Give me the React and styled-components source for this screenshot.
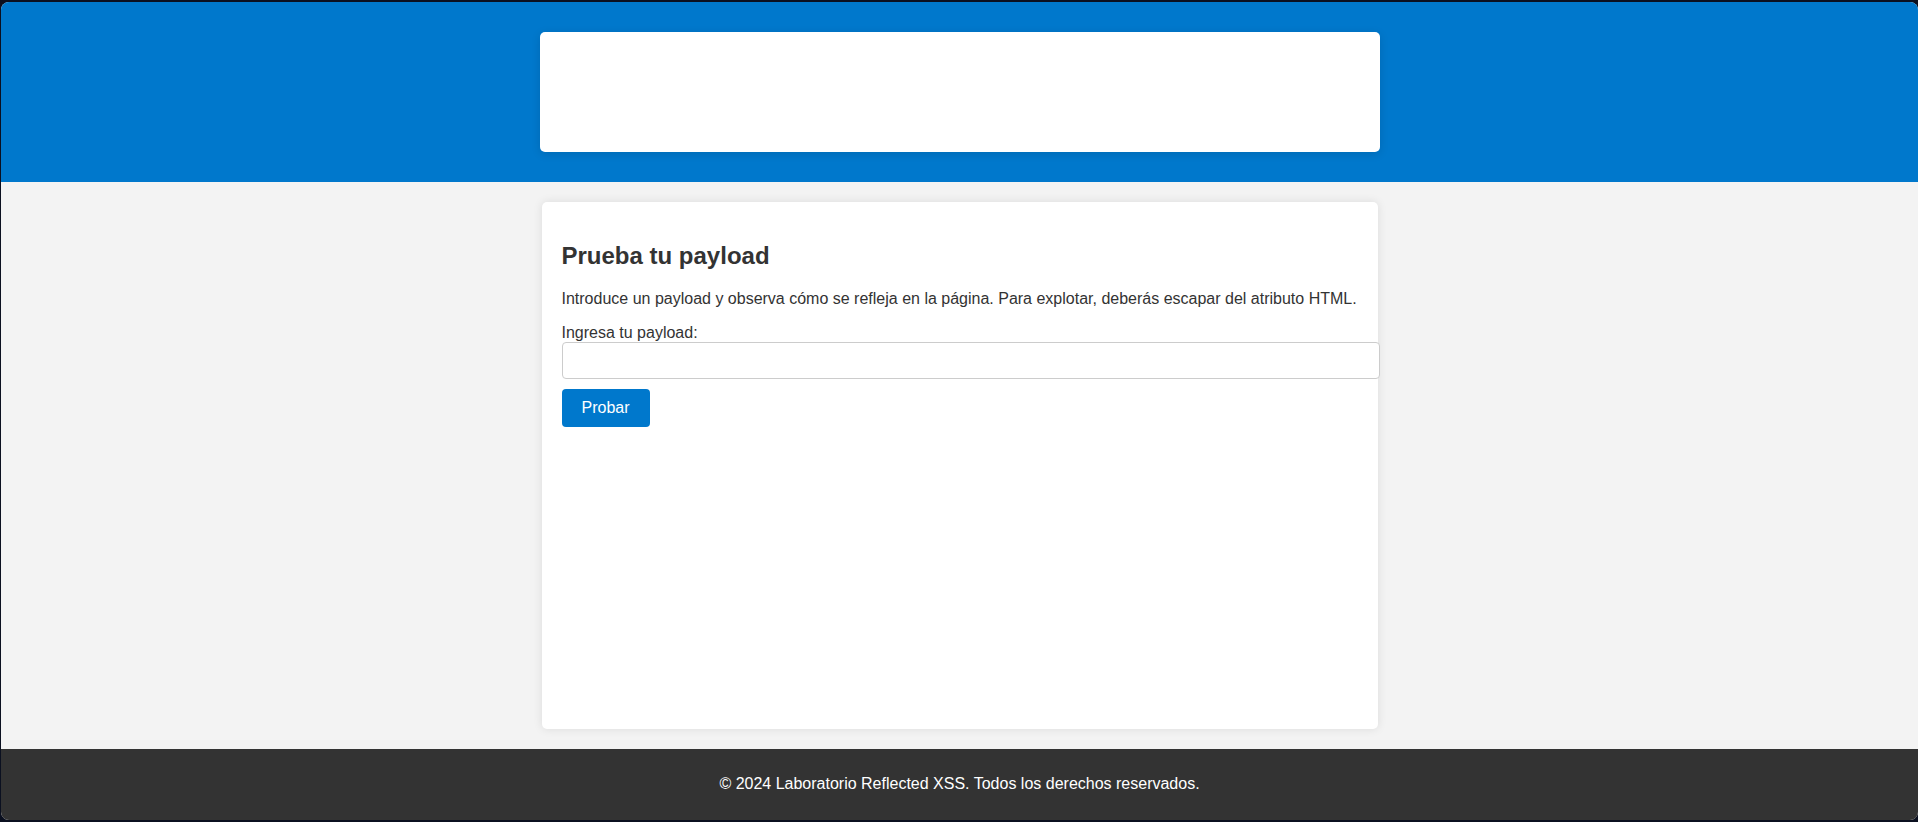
import React from "react";
import styled, { createGlobalStyle } from "styled-components";

const Global = createGlobalStyle`
  html, body {
    margin: 0;
    padding: 0;
    background: #0b1020;
    font-family: "Liberation Sans", Arial, sans-serif;
    color: #333;
  }
  * { box-sizing: border-box; }
`;

const Frame = styled.div`
  margin: 2px 0 0 1px;
  height: 818px;
  border-radius: 8px;
  overflow: hidden;
  display: flex;
  flex-direction: column;
  background: #f3f3f3;
`;

const Header = styled.header`
  background: #0078cc;
  height: 180px;
  padding: 30px 0;
  display: flex;
  justify-content: center;
`;

const HeaderBox = styled.div`
  width: 840px;
  height: 120px;
  background: #fff;
  border-radius: 5px;
  box-shadow: 0 2px 10px rgba(0, 0, 0, 0.12);
`;

const Main = styled.main`
  flex: 1;
  padding: 20px 0;
  display: flex;
  flex-direction: column;
  align-items: center;
`;

const Card = styled.section`
  flex: 1;
  width: 836px;
  background: #fff;
  border-radius: 5px;
  padding: 20px;
  box-shadow: 0 0 10px rgba(0, 0, 0, 0.1);
`;

const Title = styled.h2`
  font-size: 24px;
  font-weight: bold;
  margin: 20px 0;
  color: #333;
`;

const Text = styled.p`
  font-size: 16px;
  margin: 16px 0;
`;

const Label = styled.label`
  display: block;
  font-size: 16px;
`;

const Input = styled.input`
  display: block;
  box-sizing: content-box;
  width: 800px;
  height: 19px;
  padding: 8px;
  margin: 0;
  font-size: 16px;
  font-family: "Liberation Sans", Arial, sans-serif;
  border: 1px solid #ccc;
  border-radius: 4px;
  outline: none;
  background: #fff;
`;

const Button = styled.button`
  margin-top: 10px;
  padding: 10px 20px;
  font-size: 16px;
  line-height: 18px;
  font-family: "Liberation Sans", Arial, sans-serif;
  color: #fff;
  background: #0078cc;
  border: none;
  border-radius: 4px;
  cursor: pointer;
`;

const Footer = styled.footer`
  background: #333;
  color: #fff;
  text-align: center;
  height: 71px;
  padding: 10px;
`;

const FooterText = styled.p`
  margin: 16px 0;
  font-size: 16px;
`;

export default function App() {
  return (
    <>
      <Global />
      <Frame>
        <Header>
          <HeaderBox />
        </Header>
        <Main>
          <Card>
            <Title>Prueba tu payload</Title>
            <Text>
              Introduce un payload y observa cómo se refleja en la página. Para explotar, deberás escapar del atributo HTML.
            </Text>
            <form onSubmit={(e) => e.preventDefault()}>
              <Label htmlFor="payload">Ingresa tu payload:</Label>
              <Input id="payload" type="text" />
              <Button type="submit">Probar</Button>
            </form>
          </Card>
        </Main>
        <Footer>
          <FooterText>© 2024 Laboratorio Reflected XSS. Todos los derechos reservados.</FooterText>
        </Footer>
      </Frame>
    </>
  );
}
